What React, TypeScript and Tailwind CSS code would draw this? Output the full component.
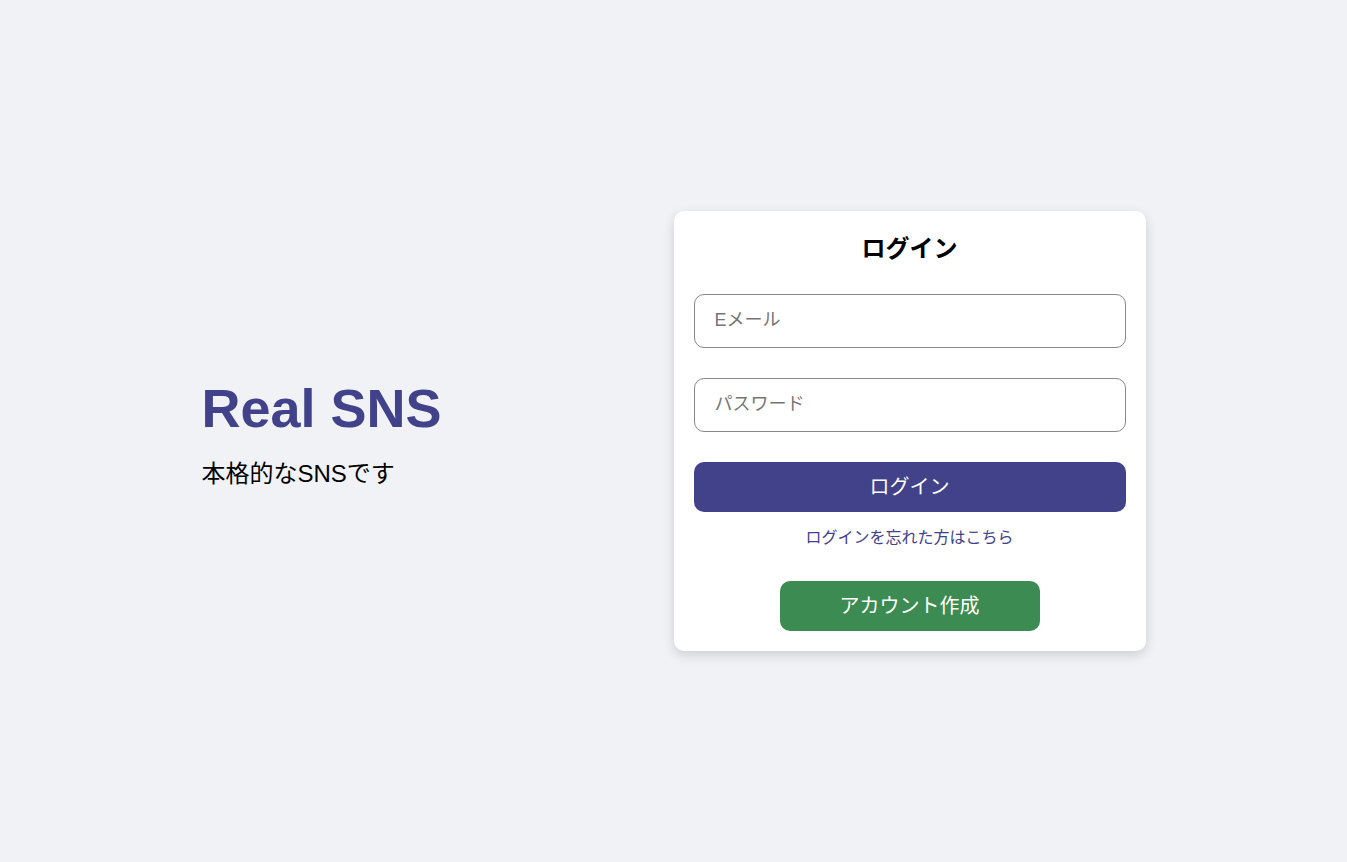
export default function App() {
  return (
    <div
      className="w-full h-[862px] bg-[#f0f2f5] flex items-center justify-center"
      style={{ fontFamily: '"Liberation Sans", "Noto Sans CJK JP", sans-serif' }}
    >
      <div className="w-[944px] h-[70%] flex">
        {/* Left: brand */}
        <div className="flex-1 flex flex-col justify-center pt-[6px]">
          <h3 className="text-[54px] leading-[1.2] font-bold text-[#42428a] mb-[16px]">Real SNS</h3>
          <span className="text-[24px] text-black">本格的なSNSです</span>
        </div>

        {/* Right: login card */}
        <div className="flex-1 flex flex-col justify-center">
          <div className="bg-white rounded-[10px] shadow-[0_4px_12px_rgba(0,0,0,0.15)] p-5 flex flex-col">
            <p className="text-center text-[24px] font-bold text-black leading-9">ログイン</p>
            <input
              type="email"
              placeholder="Eメール"
              className="mt-[27px] h-[54px] rounded-[10px] border border-[#888] px-5 text-[18px] outline-none placeholder:text-[#757575]"
            />
            <input
              type="password"
              placeholder="パスワード"
              className="mt-[30px] h-[54px] rounded-[10px] border border-[#888] px-5 text-[18px] outline-none placeholder:text-[#757575]"
            />
            <button className="mt-[30px] h-[50px] rounded-[10px] bg-[#42428a] text-white text-[20px]">
              ログイン
            </button>
            <span className="mt-4 text-center text-[16px] leading-5 text-[#42428a]">ログインを忘れた方はこちら</span>
            <button className="mt-[33px] self-center w-[260px] h-[50px] rounded-[10px] bg-[#3b8b52] text-white text-[20px]">
              アカウント作成
            </button>
          </div>
        </div>
      </div>
    </div>
  );
}
